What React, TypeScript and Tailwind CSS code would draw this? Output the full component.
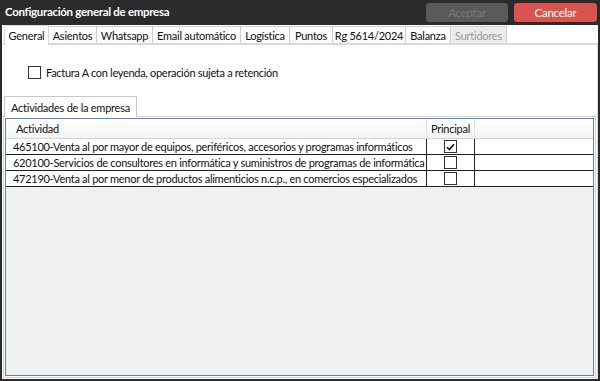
const tabs = [
  { label: 'General', w: 'w-[45px]', selected: true },
  { label: 'Asientos', w: 'w-[49px]' },
  { label: 'Whatsapp', w: 'w-[57px]' },
  { label: 'Email automático', w: 'w-[89px]' },
  { label: 'Logística', w: 'w-[50px]' },
  { label: 'Puntos', w: 'w-[44px]' },
  { label: 'Rg 5614/2024', w: 'w-[74px]' },
  { label: 'Balanza', w: 'w-[46px]' },
  { label: 'Surtidores', w: 'w-[57px]', disabled: true },
];

const actividades = [
  {
    text: '465100-Venta al por mayor de equipos, periféricos, accesorios y programas informáticos',
    principal: true,
  },
  {
    text: '620100-Servicios de consultores en informática y suministros de programas de informática',
    principal: false,
  },
  {
    text: '472190-Venta al por menor de productos alimenticios n.c.p., en comercios especializados',
    principal: false,
  },
];

function Check({ checked }: { checked?: boolean }) {
  return (
    <span className="flex h-[13px] w-[13px] items-center justify-center border border-[#333] bg-white">
      {checked && (
        <svg width="9" height="8" viewBox="0 0 9 8">
          <path d="M1 4.2 L3.4 6.6 L8 1.2" fill="none" stroke="#111" strokeWidth="1.6" />
        </svg>
      )}
    </span>
  );
}

export default function App() {
  return (
    <div
      className="flex h-[381px] w-[600px] flex-col whitespace-nowrap bg-[#2b2b2b] text-[11px] leading-none tracking-[-0.25px] text-[#111]"
      style={{ fontFamily: 'Lato, sans-serif' }}
    >
      {/* title bar */}
      <div className="flex h-[25px] items-start justify-between pl-[5px] pr-[3px] pt-[3px]">
        <span className="mt-[3px] text-[11.5px] font-bold tracking-[-0.3px] text-white">
          Configuración general de empresa
        </span>
        <div className="flex gap-[6px]">
          <button className="h-[19px] w-[82px] rounded-[3px] bg-[#5a5a5a] text-[11.5px] text-[#787878]">
            Aceptar
          </button>
          <button className="h-[19px] w-[83px] rounded-[3px] bg-[#d9534f] text-[11.5px] text-white">
            Cancelar
          </button>
        </div>
      </div>

      {/* body */}
      <div className="mx-[2px] mb-[2px] flex flex-1 flex-col bg-white">
        <div className="flex items-end pl-[2px]">
          {tabs.map((t) =>
            t.selected ? (
              <div
                key={t.label}
                className={`relative z-10 -mb-[2px] flex h-[20px] items-center justify-center border border-b-0 border-[#d9d9d9] bg-white ${t.w}`}
              >
                {t.label}
              </div>
            ) : (
              <div
                key={t.label}
                className={`-ml-[1px] flex h-[17px] items-center justify-center border border-b-0 border-[#cfcfcf] ${t.w} ${
                  t.disabled ? 'bg-[#ececec] text-[#9a9a9a]' : 'bg-[#fbfbfb]'
                }`}
              >
                {t.label}
              </div>
            )
          )}
        </div>

        <div className="ml-[1px] flex flex-1 flex-col border-t-2 border-r border-[#d9d9d9] pt-[21px]">
          <label className="flex h-[13px] items-center pl-[25px]">
            <span className="h-[13px] w-[13px] border border-[#333] bg-white" />
            <span className="ml-[5px] tracking-[-0.3px]">Factura A con leyenda, operación sujeta a retención</span>
          </label>

          <div className="mt-[17px] flex pl-[1px]">
            <div className="relative z-10 -mb-[1px] flex h-[21px] w-[133px] items-center border border-b-0 border-[#c8c8c8] bg-white pl-[6px]">
              Actividades de la empresa
            </div>
          </div>

          <div className="mb-[1px] mr-[1px] flex flex-1 flex-col border border-[#d4d4d4] p-[1px]">
            <div className="flex flex-1 flex-col border border-[#5b86b1] bg-[#f0f0f0]">
              {/* header */}
              <div className="flex h-[20px] border-b border-[#d5d5d5] bg-gradient-to-b from-[#ffffff] to-[#f4f4f4]">
                <div className="flex w-[421px] items-center border-r border-[#e2e2e2] pl-[10px]">Actividad</div>
                <div className="flex w-[48px] items-center justify-center border-r border-[#e2e2e2]">Principal</div>
              </div>
              {actividades.map((a) => (
                <div key={a.text} className="flex h-[16px] border-b border-[#222] bg-white">
                  <div className="flex w-[421px] items-center overflow-hidden border-r border-[#222] pl-[7px] tracking-[-0.28px]">
                    {a.text}
                  </div>
                  <div className="flex w-[48px] items-center justify-center border-r border-[#222]">
                    <Check checked={a.principal} />
                  </div>
                </div>
              ))}
            </div>
          </div>
        </div>
      </div>
    </div>
  );
}
